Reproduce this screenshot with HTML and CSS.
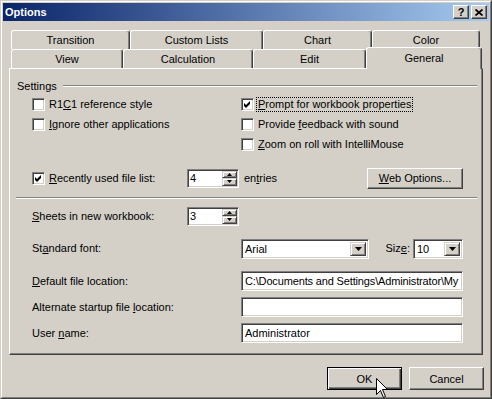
FILE: index.html
```html
<!DOCTYPE html>
<html lang="en">
<head>
    <meta charset="UTF-8">
    <title>Options</title>
    <link rel="stylesheet" href="styles.css">
</head>
<body>
    <div class="window">
        <div class="window-inner">
            <div class="titlebar">
                <span class="title">Options</span>
                <div class="caption-btns">
                    <span class="cap-btn">?</span>
                    <span class="cap-btn">
                        <svg width="8" height="7" viewBox="0 0 8 7"><path d="M0.5 0.5 L7.5 6.5 M7.5 0.5 L0.5 6.5" stroke="#000" stroke-width="1.7"/></svg>
                    </span>
                </div>
            </div>

            <div class="client">
                <div class="tabs">
                    <div class="tab-row">
                        <div class="tab tab-transition">Transition</div>
                        <div class="tab tab-lists">Custom Lists</div>
                        <div class="tab tab-chart">Chart</div>
                        <div class="tab tab-color">Color</div>
                    </div>
                    <div class="tab-row">
                        <div class="tab tab-view">View</div>
                        <div class="tab tab-calc">Calculation</div>
                        <div class="tab tab-edit">Edit</div>
                        <div class="tab tab-general active">General</div>
                    </div>
                </div>

                <div class="panel">
                    <div class="group-head">
                        <span>Settings</span>
                        <span class="etch"></span>
                    </div>

                    <div class="checks">
                        <label class="check"><span class="box"></span><span class="lbl">R1<u>C</u>1 reference style</span></label>
                        <label class="check"><span class="box"><svg width="7" height="7" viewBox="0 0 7 7"><path d="M0 2 L2 4 L6 0 L6 3 L2 7 L0 5 Z"/></svg></span><span class="lbl focus"><u>P</u>rompt for workbook properties</span></label>
                        <label class="check"><span class="box"></span><span class="lbl"><u>I</u>gnore other applications</span></label>
                        <label class="check"><span class="box"></span><span class="lbl">Provide <u>f</u>eedback with sound</span></label>
                        <span></span>
                        <label class="check"><span class="box"></span><span class="lbl"><u>Z</u>oom on roll with IntelliMouse</span></label>
                    </div>

                    <div class="row row-recent">
                        <label class="check lead"><span class="box"><svg width="7" height="7" viewBox="0 0 7 7"><path d="M0 2 L2 4 L6 0 L6 3 L2 7 L0 5 Z"/></svg></span><span class="lbl"><u>R</u>ecently used file list:</span></label>
                        <div class="spin field">
                            <span class="value">4</span>
                            <span class="spin-btns">
                                <span class="spin-btn"><svg width="5" height="3" viewBox="0 0 5 3"><path d="M2.5 0 L5 3 L0 3 Z"/></svg></span>
                                <span class="spin-btn"><svg width="5" height="3" viewBox="0 0 5 3"><path d="M0 0 L5 0 L2.5 3 Z"/></svg></span>
                            </span>
                        </div>
                        <span class="after-spin">en<u>t</u>ries</span>
                        <button class="btn btn-web"><u>W</u>eb Options...</button>
                    </div>

                    <div class="etch separator"></div>

                    <div class="row row-sheets">
                        <span class="lead"><u>S</u>heets in new workbook:</span>
                        <div class="spin field">
                            <span class="value">3</span>
                            <span class="spin-btns">
                                <span class="spin-btn"><svg width="5" height="3" viewBox="0 0 5 3"><path d="M2.5 0 L5 3 L0 3 Z"/></svg></span>
                                <span class="spin-btn"><svg width="5" height="3" viewBox="0 0 5 3"><path d="M0 0 L5 0 L2.5 3 Z"/></svg></span>
                            </span>
                        </div>
                    </div>

                    <div class="row row-font">
                        <span class="lead wide">St<u>a</u>ndard font:</span>
                        <div class="combo combo-font field">
                            <span class="value">Arial</span>
                            <span class="combo-btn"><svg width="7" height="4" viewBox="0 0 7 4"><path d="M0 0 L7 0 L3.5 4 Z"/></svg></span>
                        </div>
                        <span class="size-lbl">Siz<u>e</u>:</span>
                        <div class="combo combo-size field">
                            <span class="value">10</span>
                            <span class="combo-btn"><svg width="7" height="4" viewBox="0 0 7 4"><path d="M0 0 L7 0 L3.5 4 Z"/></svg></span>
                        </div>
                    </div>

                    <div class="row row-default">
                        <span class="lead wide"><u>D</u>efault file location:</span>
                        <div class="text field"><span class="value path">C:\Documents and Settings\Administrator\My</span></div>
                    </div>

                    <div class="row row-tight">
                        <span class="lead wide">Alternate startup file <u>l</u>ocation:</span>
                        <div class="text field"><span class="value"></span></div>
                    </div>

                    <div class="row row-tight">
                        <span class="lead wide">User <u>n</u>ame:</span>
                        <div class="text field"><span class="value">Administrator</span></div>
                    </div>
                </div>

                <div class="footer">
                    <button class="btn btn-default">OK</button>
                    <button class="btn">Cancel</button>
                </div>
            </div>
        </div>

        <svg class="cursor" width="12" height="20" viewBox="0 0 12 20">
            <path d="M0.5 0.5 L0.5 16.5 L4.5 12.5 L7.5 19.5 L9.5 18.5 L6.5 11.5 L11.5 11.5 Z" fill="#fff" stroke="#000" stroke-width="1"/>
        </svg>
    </div>
</body>
</html>
```

FILE: styles.css
```css
* {
    margin: 0;
    padding: 0;
    box-sizing: border-box;
}

body {
    background: #d4d0c8;
    font-family: "Liberation Sans", Arial, sans-serif;
    font-size: 11px;
    line-height: 13px;
    color: #000;
}

u {
    text-decoration: underline;
    text-underline-offset: 1px;
}

.window {
    position: relative;
    width: 492px;
    height: 399px;
    background: #d4d0c8;
    border: 1px solid;
    border-color: #d4d0c8 #404040 #404040 #d4d0c8;
}

.window-inner {
    height: 100%;
    border: 1px solid;
    border-color: #fff #808080 #808080 #fff;
    padding: 1px;
}

/* title bar */
.titlebar {
    height: 18px;
    display: flex;
    align-items: center;
    padding-left: 2px;
    padding-right: 2px;
    background: linear-gradient(90deg, #0a246a 0%, #a6caf0 100%);
}

.title {
    color: #fff;
    font-weight: bold;
}

.caption-btns {
    margin-left: auto;
    display: flex;
    gap: 2px;
}

.cap-btn {
    width: 16px;
    height: 14px;
    display: flex;
    align-items: center;
    justify-content: center;
    background: #d4d0c8;
    border: 1px solid;
    border-color: #fff #404040 #404040 #fff;
    box-shadow: inset -1px -1px #808080;
    font-weight: bold;
    font-size: 11px;
}

/* tabs */
.client {
    padding: 9px 5px 0 6px;
}

.tabs {
    width: 474px;
}

.tab-row {
    display: flex;
    align-items: flex-start;
    height: 19px;
    padding-left: 2px;
}

.tab {
    height: 19px;
    padding-top: 3px;
    text-align: center;
    background: #d4d0c8;
    border-top: 1px solid #fff;
    border-left: 1px solid #fff;
    border-right: 1px solid #404040;
    border-radius: 3px 3px 0 0;
    box-shadow: inset -1px 0 #808080;
}

.tab-transition { width: 119px; }
.tab-lists { width: 133px; }
.tab-chart { width: 109px; }
.tab-color { width: 108px; }
.tab-view { width: 112px; }
.tab-calc { width: 130px; }
.tab-edit { width: 113px; }
.tab-general { width: 116px; }

.tab.active {
    position: relative;
    z-index: 1;
    height: 22px;
    margin-top: -2px;
    padding-top: 4px;
}

/* panel */
.panel {
    width: 474px;
    height: 287px;
    padding: 10px 5px 0 6px;
    border: 1px solid;
    border-color: #fff #404040 #404040 #fff;
    box-shadow: inset -1px -1px #808080;
}

.etch {
    height: 2px;
    border-top: 1px solid #808080;
    border-bottom: 1px solid #fff;
}

.group-head {
    height: 14px;
    display: flex;
    align-items: center;
    padding-left: 1px;
}

.group-head .etch {
    flex: 1;
    margin-left: 6px;
}

.checks {
    margin-top: 1px;
    padding-left: 16px;
    display: grid;
    grid-template-columns: 209px 1fr;
    grid-auto-rows: 20px;
}

.check {
    display: flex;
    align-items: center;
}

.box {
    width: 13px;
    height: 13px;
    flex: none;
    display: flex;
    align-items: center;
    justify-content: center;
    background: #fff;
    border: 1px solid;
    border-color: #808080 #fff #fff #808080;
    box-shadow: inset 1px 1px #404040, inset -1px -1px #d4d0c8;
}

.lbl {
    margin-left: 2px;
    padding: 0 1px;
    border: 1px dotted transparent;
}

.lbl.focus {
    border-color: #000;
}

.row {
    display: flex;
    align-items: center;
    height: 22px;
    padding-left: 16px;
    padding-right: 14px;
}

.row-recent { margin-top: 13px; }
.row-sheets { margin-top: 6px; }
.row-font { margin-top: 11px; height: 21px; }
.row-default { margin-top: 11px; }
.row-tight { margin-top: 4px; }

.separator {
    margin-top: 8px;
}

.lead {
    width: 155px;
    flex: none;
}

.lead.wide {
    width: 209px;
}

.field {
    background: #fff;
    border: 1px solid;
    border-color: #808080 #fff #fff #808080;
    box-shadow: inset 1px 1px #404040, inset -1px -1px #d4d0c8;
    display: flex;
    align-items: stretch;
    overflow: hidden;
}

.value {
    flex: 1;
    padding: 2px 0 0 3px;
    white-space: nowrap;
    overflow: hidden;
}

.spin {
    width: 52px;
    height: 19px;
    padding: 1px 1px 1px 0;
}

.spin .value {
    padding-top: 1px;
    padding-left: 2px;
}

.spin-btns {
    width: 15px;
    display: flex;
    flex-direction: column;
}

.spin-btn,
.combo-btn {
    flex: 1;
    display: flex;
    align-items: center;
    justify-content: center;
    background: #d4d0c8;
    border: 1px solid;
    border-color: #d4d0c8 #404040 #404040 #d4d0c8;
    box-shadow: inset 1px 1px #fff, inset -1px -1px #808080;
}

.after-spin {
    margin-left: 5px;
}

.combo {
    height: 20px;
    padding: 2px;
}

.combo .value {
    padding: 1px 0 0 1px;
}

.combo-btn {
    flex: none;
    width: 16px;
}

.combo-font { width: 128px; }
.combo-size { width: 50px; }

.size-lbl {
    margin-left: auto;
    margin-right: 3px;
}

.text {
    width: 222px;
    height: 20px;
}

.text .value {
    padding-top: 3px;
    padding-left: 3px;
}

.text .path {
    letter-spacing: -0.15px;
}

/* buttons */
.btn {
    font-family: inherit;
    font-size: 11px;
    color: #000;
    background: #d4d0c8;
    border: 1px solid;
    border-color: #fff #404040 #404040 #fff;
    box-shadow: inset -1px -1px #808080;
    width: 75px;
    height: 23px;
}

.btn-web {
    margin-left: auto;
    width: 96px;
    height: 21px;
}

.btn-default {
    border: 1px solid #000;
    box-shadow: inset 1px 1px #fff, inset -1px -1px #404040, inset -2px -2px #808080;
}

.footer {
    margin-top: 12px;
    display: flex;
    justify-content: flex-end;
    gap: 7px;
}

.cursor {
    position: absolute;
    left: 375px;
    top: 377px;
}
```
